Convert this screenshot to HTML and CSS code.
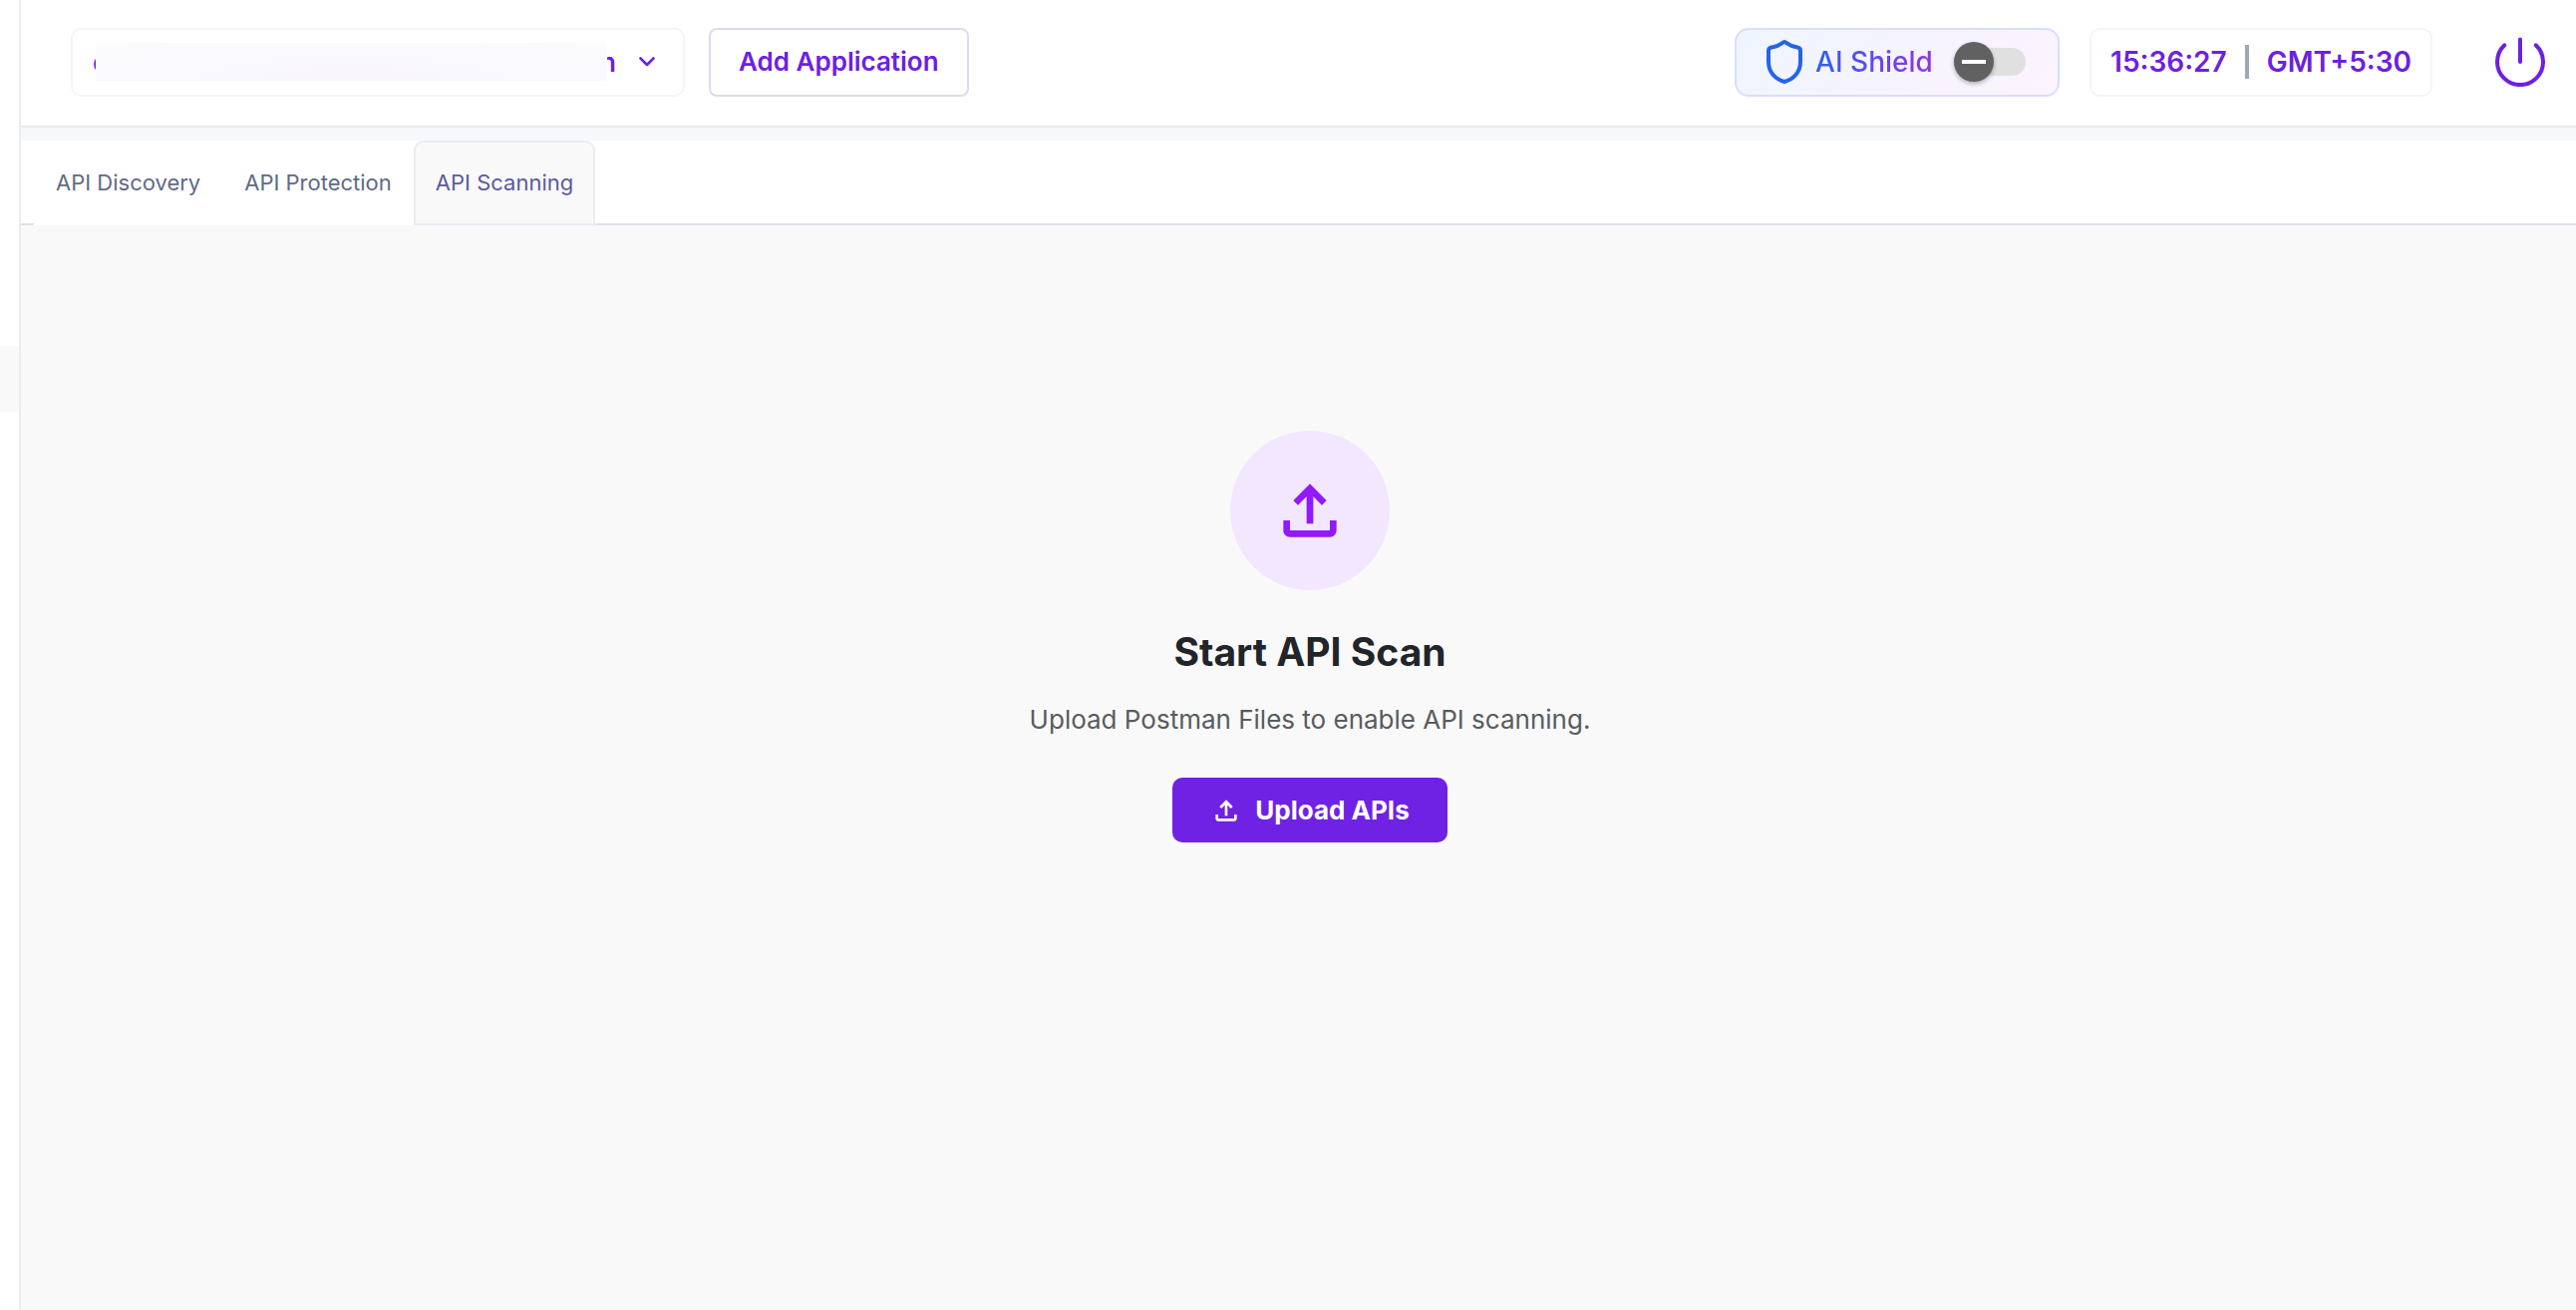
FILE: index.html
```html
<!DOCTYPE html>
<html lang="en">
<head>
    <meta charset="UTF-8">
    <title>API Scanning</title>
    <meta name="viewport" content="width=device-width, initial-scale=1">
    <link rel="stylesheet" href="styles.css">
</head>
<body>
<div class="layout">
    <aside class="sidebar">
        <div class="sidebar-active"></div>
    </aside>

    <div class="page">
        <header class="topbar">
            <div class="app-select">
                <span>c</span>
                <span class="app-hidden"></span>
                <span>n</span>
                <svg class="chevron" viewBox="0 0 16 10" aria-hidden="true">
                    <path d="M1.5 1.5 8 8l6.500-6.500" fill="none" stroke="currentColor" stroke-width="2.600" stroke-linecap="round" stroke-linejoin="round"/>
                </svg>
                <select aria-label="Application">
                    <option></option>
                </select>
            </div>
            <button class="add-btn" type="button">Add Application</button>

            <div class="ai-shield">
                <svg class="shield-icon" viewBox="0 0 36 44" aria-hidden="true">
                    <path d="M18 2C16 2 13.500 6.500 5 7.500Q2 8 2 11V22C2 32 8.500 39.500 18 42C27.500 39.500 34 32 34 22V11Q34 8 31 7.500C22.500 6.500 20 2 18 2Z" fill="none" stroke="#2563eb" stroke-width="4" stroke-linejoin="round"/>
                </svg>
                <label for="ai-toggle">AI Shield</label>
                <input type="checkbox" id="ai-toggle" class="toggle">
            </div>

            <div class="clock">
                <span>15:36:27</span>
                <span class="clock-sep"></span>
                <span>GMT+5:30</span>
            </div>

            <button class="power" type="button" aria-label="Log out">
                <svg viewBox="0 0 50 50" aria-hidden="true">
                    <path d="M25 2.500V25M9.300 8.300A23 23 0 1 0 40.700 8.300" fill="none" stroke="currentColor" stroke-width="4" stroke-linecap="round"/>
                </svg>
            </button>
        </header>

        <nav class="tabs">
            <a href="#discovery" class="tab">API Discovery</a>
            <a href="#protection" class="tab">API Protection</a>
            <a href="#scanning" class="tab active">API Scanning</a>
        </nav>

        <main class="empty-state">
            <div class="upload-circle">
                <svg viewBox="0 0 24 24" aria-hidden="true">
                    <path d="M18 15v3H6v-3H4v3c0 1.100.9 2 2 2h12c1.100 0 2-.9 2-2v-3h-2zM7 9l1.410 1.410L11 7.830V16h2V7.830l2.590 2.580L17 9l-5-5-5 5z" fill="currentColor"/>
                </svg>
            </div>
            <h1>Start API Scan</h1>
            <p>Upload Postman Files to enable API scanning.</p>
            <button class="upload-btn" type="button">
                <svg viewBox="0 0 24 24" aria-hidden="true">
                    <path d="M18 15v3H6v-3H4v3c0 1.100.9 2 2 2h12c1.100 0 2-.9 2-2v-3h-2zM7 9l1.410 1.410L11 7.830V16h2V7.830l2.590 2.580L17 9l-5-5-5 5z" fill="currentColor"/>
                </svg>
                Upload APIs
            </button>
        </main>
    </div>
</div>
</body>
</html>
```
FILE: styles.css
```css
* {
    box-sizing: border-box;
}
body {
    margin: 0;
    font-family: Inter, sans-serif;
    font-size: 26px;
    color: #212529;
    background: #f9f9f9;
}
button, select {
    font: inherit;
    cursor: pointer;
}

.layout {
    display: flex;
    min-height: 100vh;
}
.sidebar {
    width: 21px;
    flex-shrink: 0;
    padding-top: 347px;
    background: #fff;
    border-right: 2px solid #ebebf2;
}
.sidebar-active {
    height: 66px;
    background: #f9f9f9;
}
.page {
    flex: 1;
    min-width: 0;
}

/* top bar */
.topbar {
    display: flex;
    align-items: center;
    height: 128px;
    padding: 0 31px 2px 50px;
    background: #fff;
    border-bottom: 2px solid #ebebf2;
}
.app-select, .add-btn, .ai-shield, .clock {
    display: flex;
    align-items: center;
    height: 69px;
    border: 2px solid #f5f5f5;
    border-radius: 10px;
}
.app-select {
    position: relative;
    width: 616px;
    padding: 0 28px 0 20px;
    color: #6d20e2;
    font-weight: 600;
}
.app-select select {
    position: absolute;
    inset: 0;
    width: 100%;
    appearance: none;
    border: 0;
    background: transparent;
}
/* covers the application name */
.app-hidden {
    position: relative;
    flex: 1;
    height: 38px;
    margin: 0 -7px 0 -12px;
    background: radial-gradient(ellipse at 50% 100%, #f9f6fc, #f9f9fe 60%, #fcfcfe);
}
.chevron {
    width: 16px;
    height: 10px;
    margin-left: 23px;
}
.add-btn {
    margin-left: 24px;
    padding: 0 28px 2px;
    font-weight: 600;
    color: #6d20e2;
    background: #fff;
    border-color: #dedbea;
    border-radius: 8px;
}
.ai-shield {
    width: 326px;
    margin-left: auto;
    padding: 0 32px 0 30px;
    background: linear-gradient(135deg, #eff6ff, #f5f3ff 50%, #fdf4ff);
    border-color: #d9defd;
    border-radius: 14px;
}
.ai-shield label {
    margin-left: 13px;
    font-size: 28px;
    font-weight: 500;
    color: transparent;
    background: linear-gradient(90deg, #2f5fec, #9333ea);
    background-clip: text;
}
.shield-icon {
    width: 36px;
    height: 44px;
}
.toggle {
    position: relative;
    appearance: none;
    width: 72px;
    height: 28px;
    margin: 0 0 0 auto;
    border-radius: 14px;
    background: #e0e0e0;
    cursor: pointer;
}
.toggle::before {
    content: "";
    position: absolute;
    left: 0;
    top: -6px;
    width: 40px;
    height: 40px;
    border-radius: 50%;
    background: linear-gradient(#fff, #fff) center / 24px 4px no-repeat #616161;
    box-shadow: 0 2px 4px rgba(0,0,0,0.3);
}
.clock {
    gap: 18px;
    margin-left: 30px;
    padding: 0 19px;
    font-size: 28px;
    font-weight: 600;
    color: #6d20e2;
}
.clock-sep {
    width: 4px;
    height: 34px;
    background: #a0a7b4;
}
.power {
    margin-left: 63px;
    padding: 0;
    color: #6d20e2;
    background: none;
    border: 0;
}
.power svg {
    display: block;
    width: 50px;
    height: 50px;
}

/* tabs */
.tabs {
    display: flex;
    height: 85px;
    margin-top: 13px;
    padding-left: 13px;
    background: #fff;
    border-bottom: 2px solid #dee2e6;
    box-shadow: 0 -13px 0 #f7f8fb;
}
.tab {
    display: flex;
    align-items: center;
    margin-bottom: -2px;
    padding: 0 20px 2px;
    font-size: 22px;
    color: #5f6b85;
    text-decoration: none;
    background: #fff;
    border: 2px solid #fff;
    border-radius: 10px 10px 0 0;
}
.tab.active {
    color: #5b5b9c;
    background: #f9f9f9;
    border-color: #ebebf2;
}

/* nothing scanned yet */
.empty-state {
    display: flex;
    flex-direction: column;
    align-items: center;
    padding: 206px 0 40px 23px;
}
.upload-circle {
    display: flex;
    align-items: center;
    justify-content: center;
    width: 160px;
    height: 160px;
    border-radius: 50%;
    color: #9119fa;
    background: #f2e7ff;
}
.upload-circle svg {
    width: 80px;
    height: 80px;
}
h1 {
    margin: 38px 0 0;
    font-size: 39px;
    line-height: 48px;
    font-weight: 700;
}
p {
    margin: 28px 0 0;
    line-height: 32px;
    color: #585c60;
}
.upload-btn {
    display: flex;
    align-items: center;
    height: 65px;
    margin-top: 42px;
    padding: 0 38px;
    gap: 13px;
    font-weight: 700;
    color: #fff;
    background: #6f22e3;
    border: 0;
    border-radius: 10px;
}
.upload-btn svg {
    width: 32px;
    height: 32px;
}
```
